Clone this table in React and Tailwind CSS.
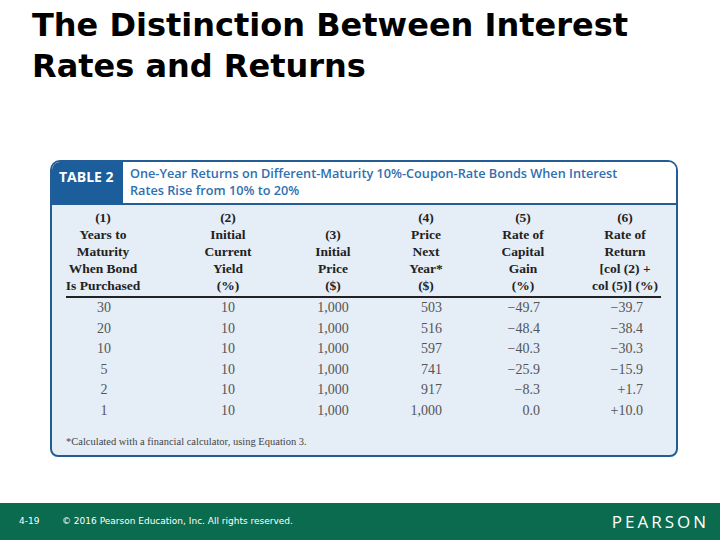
import React from "react";

const rows = [
  ["30", "10", "1,000", "503", "\u221249.7", "\u221239.7"],
  ["20", "10", "1,000", "516", "\u221248.4", "\u221238.4"],
  ["10", "10", "1,000", "597", "\u221240.3", "\u221230.3"],
  ["5", "10", "1,000", "741", "\u221225.9", "\u221215.9"],
  ["2", "10", "1,000", "917", "\u22128.3", "+1.7"],
  ["1", "10", "1,000", "1,000", "0.0", "+10.0"],
];

const headers = [
  ["(1)", "Years to", "Maturity", "When Bond", "Is Purchased"],
  ["(2)", "Initial", "Current", "Yield", "(%)"],
  ["(3)", "Initial", "Price", "($)"],
  ["(4)", "Price", "Next", "Year*", "($)"],
  ["(5)", "Rate of", "Capital", "Gain", "(%)"],
  ["(6)", "Rate of", "Return", "[col (2) +", "col (5)] (%)"],
];

const colCls = [
  "w-[102px] text-center",
  "w-[148px] text-center",
  "w-[62px] text-center",
  "w-[124px] text-center",
  "w-[70px] text-center",
  "w-[118px] text-center pl-[16px]",
];

const dataCls = [
  "w-[102px] text-center pl-[2px]",
  "w-[148px] text-center",
  "w-[62px] text-center",
  "w-[124px] text-right pr-[46px]",
  "w-[70px] text-right pr-[18px]",
  "w-[118px] text-right pr-[33px]",
];

export default function App() {
  return (
    <div className="w-[720px] h-[540px] bg-white flex flex-col overflow-hidden">
      <div
        className="px-[32px] pt-[5px] h-[140px] text-[32px] leading-[41px] font-bold text-black"
        style={{ fontFamily: "'DejaVu Sans', sans-serif" }}
      >
        <div>The Distinction Between Interest</div>
        <div>Rates and Returns</div>
      </div>

      <div className="ml-[50px] mt-[20px] w-[628px] h-[297px] border-2 border-[#245d93] rounded-[10px] rounded-b-[8px] overflow-hidden flex flex-col bg-[#e5edf7]">
        <div className="h-[43px] flex bg-white border-b-2 border-[#245d93] shrink-0">
          <div
            className="w-[71px] bg-[#1c5d9b] text-white font-bold text-[14px] pt-[4px] pl-[7px]"
            style={{ fontFamily: "'Open Sans', sans-serif" }}
          >
            TABLE 2
          </div>
          <div
            className="pl-[7px] pt-[3px] text-[#2f6fb0] font-semibold text-[12.7px] leading-[17px]"
            style={{ fontFamily: "'Open Sans', sans-serif" }}
          >
            <div>One-Year Returns on Different-Maturity 10%-Coupon-Rate Bonds When Interest</div>
            <div>Rates Rise from 10% to 20%</div>
          </div>
        </div>

        <div style={{ fontFamily: "'Liberation Serif', serif" }} className="flex flex-col">
          <div className="flex pt-[4px] text-[13.5px] leading-[17px] font-bold text-[#222]">
            {headers.map((h, i) => (
              <div key={i} className={`${colCls[i]} flex flex-col justify-end h-[85px]`}>
                {h.map((t, j) => (
                  <div key={j} className="whitespace-nowrap">{t}</div>
                ))}
              </div>
            ))}
          </div>
          <div className="ml-[14px] w-[595px] h-[2px] bg-[#222] mt-[2px]" />
          <div className="text-[14px] text-[#555] leading-[20.6px]">
            {rows.map((r, i) => (
              <div key={i} className="flex">
                {r.map((v, j) => (
                  <div key={j} className={dataCls[j]}>{v}</div>
                ))}
              </div>
            ))}
          </div>
          <div className="ml-[14px] mt-[12px] text-[10.5px] text-[#444]">
            *Calculated with a financial calculator, using Equation 3.
          </div>
        </div>
      </div>

      <div className="mt-auto h-[37px] bg-[#0b6b4f] flex items-center text-white">
        <div
          className="pl-[19px] w-[62px] text-[9px]"
          style={{ fontFamily: "'DejaVu Sans', sans-serif" }}
        >
          4-19
        </div>
        <div
          className="text-[9px]"
          style={{ fontFamily: "'DejaVu Sans', sans-serif" }}
        >
          © 2016 Pearson Education, Inc. All rights reserved.
        </div>
        <div
          className="ml-auto mr-[11px] text-[17px] tracking-[3px] pt-[1px]"
          style={{ fontFamily: "'Open Sans', sans-serif" }}
        >
          PEARSON
        </div>
      </div>
    </div>
  );
}
